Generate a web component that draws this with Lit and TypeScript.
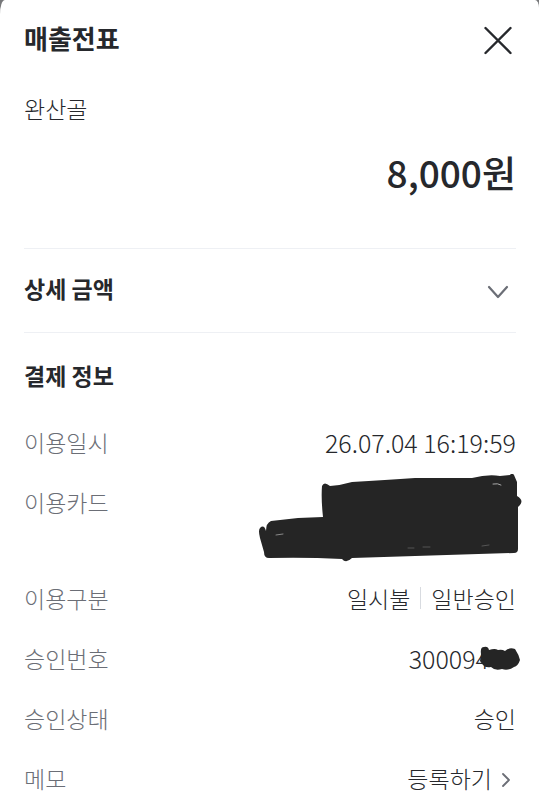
import { LitElement, html, css, svg } from 'lit';
import { customElement, property, state } from 'lit/decorators.js';

const cardScribble = svg`
  <path fill="#252525" d="M10 64 Q8 56 10 54 Q14 50 16 57 Q16 49 21 47 L48 44 L73 43 Q71 25 72 12 Q74 7 80 12 Q92 11 102 8 Q136 6 165 4 L222 4 Q238 0 250 2 L260 1 Q262 -2 264 1 L267 8 L267 22 Q274 26 270 31 L268 33 L268 75 Q268 79 264 79 L102 84 Q96 90 92 85 Q55 83 19 84 Q14 84 14 78 Z"/>
  <g fill="none" stroke="#aaa" stroke-width="1" stroke-linecap="round">
    <path d="M243 10 Q248 9 251 11"/>
    <path d="M26 61 L33 60" stroke="#888"/>
    <path d="M158 74 L164 74 M173 73 L180 73 M232 72 L239 71" stroke="#555"/>
  </g>`;

@customElement('receipt-row')
export class ReceiptRow extends LitElement {
  static styles = css`
    :host {
      display: flex;
      justify-content: space-between;
      align-items: flex-start;
      line-height: 36px;
    }

    .label {
      color: #6b6e76;
    }

    .value {
      display: flex;
      align-items: center;
      color: #26282c;
    }
  `;

  @property() label = '';

  render() {
    return html`
      <span class="label">${this.label}</span>
      <div class="value"><slot></slot></div>
    `;
  }
}

@customElement('app-root')
export class AppRoot extends LitElement {
  static styles = css`
    :host {
      display: block;
      min-height: 100vh;
      background: #77787a;
      font-family: 'Noto Sans CJK KR', sans-serif;
      font-size: 23px;
      font-weight: 300;
      color: #26282c;
    }

    .sheet {
      box-sizing: border-box;
      min-height: 100vh;
      padding: 18px 23px 0 24px;
      background: #fff;
      border-radius: 5px 4px 0 0 / 14px 8px 0 0;
    }

    header {
      display: flex;
      align-items: center;
      justify-content: space-between;
      height: 40px;
    }

    h1,
    h2,
    p {
      margin: 0;
    }

    h1 {
      font-size: 26px;
      font-weight: 700;
      line-height: 40px;
    }

    h2 {
      font-size: 23px;
      font-weight: 700;
      line-height: 36px;
    }

    button {
      display: flex;
      align-items: center;
      padding: 0;
      border: 0;
      background: none;
      font: inherit;
      color: inherit;
      cursor: pointer;
    }

    svg {
      display: block;
      flex: none;
    }

    .store {
      margin-top: 32px;
      line-height: 36px;
    }

    .amount {
      margin-top: 18px;
      font-size: 37px;
      font-weight: 500;
      line-height: 56px;
      text-align: right;
    }

    .detail {
      margin-top: 48px;
      border-top: 1px solid #eef0f4;
      border-bottom: 1px solid #eef0f4;
    }

    .detail button {
      width: 100%;
      justify-content: space-between;
      padding: 21px 0 26px;
    }

    .payment {
      display: flex;
      flex-direction: column;
      gap: 24px;
      padding: 24px 0 10px;
    }

    .payment h2 {
      margin-bottom: 7px;
    }

    .number {
      font-size: 25px;
    }

    .card {
      position: relative;
      width: 192px;
      height: 72px;
    }

    .card svg {
      position: absolute;
      right: -8px;
      top: -10px;
    }

    .bar {
      width: 1px;
      height: 22px;
      margin: 0 10px;
      background: #d8dbe0;
    }

    .masked {
      position: relative;
      padding-right: 27px;
    }

    .masked svg {
      position: absolute;
      right: -5px;
      top: 5px;
    }

    .memo {
      gap: 6px;
    }
  `;

  @state() private open = false;

  private toggle() {
    this.open = !this.open;
  }

  render() {
    return html`
      <main class="sheet">
        <header>
          <h1>매출전표</h1>
          <button aria-label="닫기">
            <svg width="36" height="36" viewBox="0 0 36 36" fill="none" stroke="#26282c" stroke-width="2.4" stroke-linecap="round">
              <path d="M5.5 8 L30.5 33 M30.5 8 L5.5 33" />
            </svg>
          </button>
        </header>

        <p class="store">완산골</p>
        <p class="amount">8,000원</p>

        <section class="detail">
          <button aria-expanded=${this.open} @click=${this.toggle}>
            <h2>상세 금액</h2>
            <svg width="36" height="36" viewBox="0 0 36 36" fill="none" stroke="#6b6e76" stroke-width="2.2" stroke-linecap="round" stroke-linejoin="round">
              <path d="M9 17 L18 27 L27 17" />
            </svg>
          </button>
        </section>

        <section class="payment">
          <h2>결제 정보</h2>
          <receipt-row label="이용일시"><span class="number">26.07.04 16:19:59</span></receipt-row>
          <receipt-row label="이용카드">
            <div class="card">
              <svg width="274" height="90" viewBox="0 0 274 90" aria-hidden="true">${cardScribble}</svg>
            </div>
          </receipt-row>
          <receipt-row label="이용구분">
            <span>일시불</span><span class="bar"></span><span>일반승인</span>
          </receipt-row>
          <receipt-row label="승인번호">
            <span class="number masked">300094
              <svg width="44" height="26" viewBox="0 0 44 26" aria-hidden="true">
                <path fill="#252525" d="M4 9 Q3 2 7 2 Q11 1 12 5 Q18 3 21 5 Q25 4 28 6 Q32 2 38 4 Q42 10 43 15 Q41 21 37 22 Q31 26 25 24 Q18 26 14 22 Q8 23 6 20 L3 16 Z" />
              </svg>
            </span>
          </receipt-row>
          <receipt-row label="승인상태"><span>승인</span></receipt-row>
          <receipt-row label="메모">
            <button class="memo">
              등록하기
              <svg width="18" height="18" viewBox="0 0 18 18" fill="none" stroke="#6b6e76" stroke-width="1.8" stroke-linecap="round" stroke-linejoin="round">
                <path d="M5 5 L11 11 L5 17" />
              </svg>
            </button>
          </receipt-row>
        </section>
      </main>
    `;
  }
}
